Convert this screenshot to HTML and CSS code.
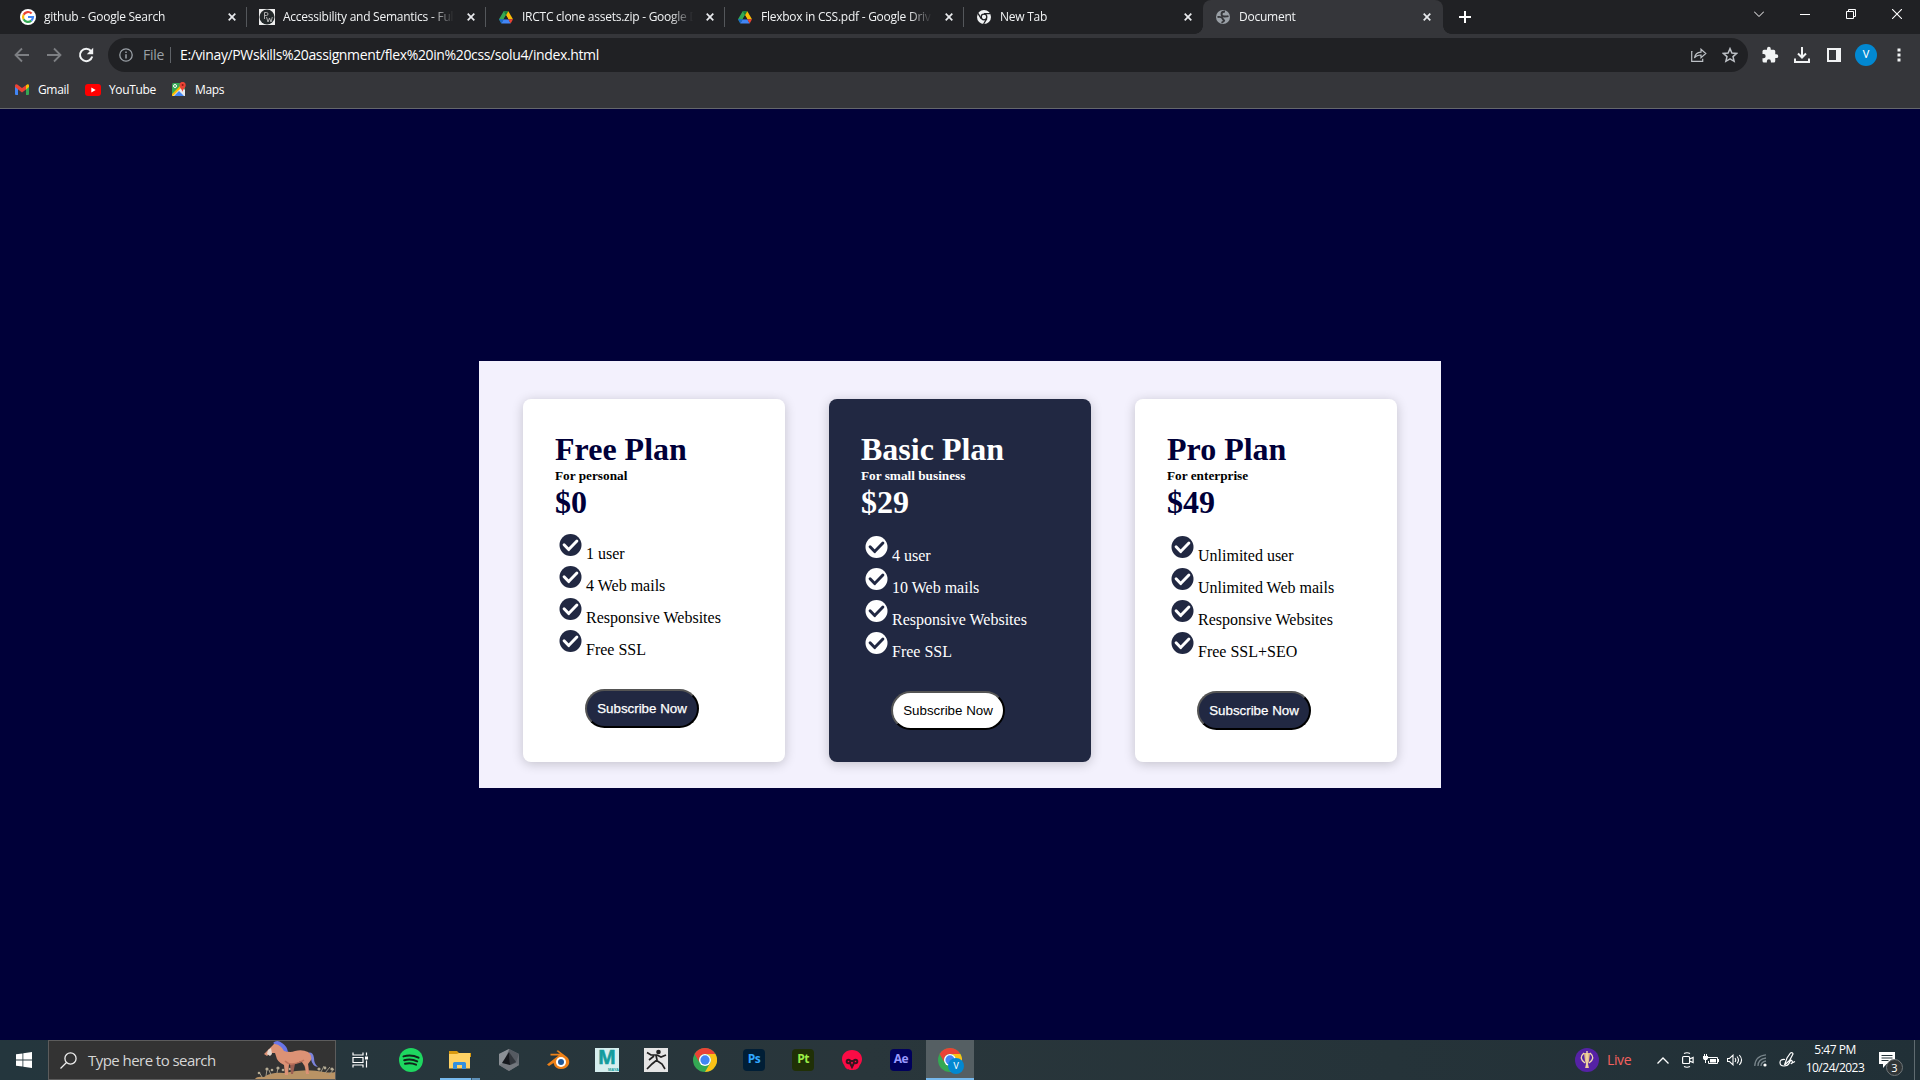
FILE: index.html
```html
<!DOCTYPE html>
<html lang="en">
<head>
<meta charset="utf-8">
<title>Document</title>
<link rel="stylesheet" href="styles.css">
</head>
<body>
<svg class="sprite" aria-hidden="true">
  <symbol id="x" viewBox="0 0 8 8"><path d="M.7.7l6.600 6.600M7.300.7L.7 7.300" stroke="#e8eaed" stroke-width="1.700"/></symbol>
  <symbol id="check" viewBox="0 0 24 24"><circle cx="12" cy="12" r="12" fill="currentColor"/><path class="tick" d="M5 11.800l5 5.200 9-9.400" fill="none" stroke-width="3.200" stroke-linecap="round" stroke-linejoin="round"/></symbol>
  <symbol id="drive" viewBox="0 0 24 22"><path d="M8 1h8L8.200 14.500 4 22 0 15z" fill="#34a853"/><path d="M8 1h8l-4 7z" fill="#188038"/><path d="M16 1l8 14h-8L12 8z" fill="#fbbc04"/><path d="M8 15h8l4 7H4z" fill="#4285f4"/><path d="M16 15h8l-4 7z" fill="#ea4335"/><path d="M0 15h8l-4 7z" fill="#1967d2"/><path d="M12 8l4 7H8z" fill="#202124"/></symbol>
  <symbol id="chrome" viewBox="0 0 48 48"><circle cx="24" cy="24" r="24" fill="#34a853"/><path d="M3.200 12A24 24 0 0 1 44.800 12H24a12 12 0 0 0-10.400 18z" fill="#ea4335"/><path d="M44.800 12A24 24 0 0 1 24 48L34.400 30A12 12 0 0 0 24 12z" fill="#fbc116"/><circle cx="24" cy="24" r="12" fill="#fff"/><circle cx="24" cy="24" r="9.300" fill="#4285f4"/></symbol>
</svg>

<header class="browser">
  <div class="tabstrip">
    <div class="tab"><svg class="fav" viewBox="0 0 16 16"><circle cx="8" cy="8" r="8" fill="#fff"/><g fill="none" stroke-width="2.200"><path d="M11.600 4.500A5 5 0 0 0 3.600 5.700" stroke="#ea4335"/><path d="M3.600 5.700a5 5 0 0 0 0 4.600" stroke="#fbbc05"/><path d="M3.600 10.300a5 5 0 0 0 7.700 1.400" stroke="#34a853"/><path d="M11.300 11.700A5 5 0 0 0 13 8H8" stroke="#4285f4"/></g></svg><span class="label">github - Google Search</span><svg class="close"><use href="#x"/></svg></div>
    <div class="tab"><svg class="fav" viewBox="0 0 16 16"><path d="M0 0h16v16H0z" fill="#eee"/><circle cx="8" cy="8" r="7.500" fill="#222829"/><path d="M5.500 10V3.500h2a1.500 1.500 0 0 1 0 3h-2M7.500 8l1.500 5 1.500-4 1.500 4 1.300-5" fill="none" stroke="#bbb" stroke-width=".9"/></svg><span class="label">Accessibility and Semantics - Full</span><svg class="close"><use href="#x"/></svg></div>
    <div class="tab"><svg class="fav drive"><use href="#drive"/></svg><span class="label">IRCTC clone assets.zip - Google D</span><svg class="close"><use href="#x"/></svg></div>
    <div class="tab"><svg class="fav drive"><use href="#drive"/></svg><span class="label">Flexbox in CSS.pdf - Google Driv</span><svg class="close"><use href="#x"/></svg></div>
    <div class="tab last"><svg class="fav" viewBox="0 0 16 16"><circle cx="8" cy="8" r="7" fill="#f1f3f4"/><circle cx="8" cy="8" r="2.800" fill="none" stroke="#202124" stroke-width="1.300"/><path d="M8 4.700h6.500M5.200 9.600L2 4.300M10.800 9.600L7.600 15" stroke="#202124" stroke-width="1.300"/></svg><span class="label">New Tab</span><svg class="close"><use href="#x"/></svg></div>
    <div class="tab active"><svg class="fav" viewBox="0 0 16 16"><circle cx="8" cy="8" r="7" fill="#9aa0a6"/><path d="M10 2.500Q6.500 2.500 6.500 5t3 2.500 4-.3M2.500 8q4-.5 4.800 1.200T9 11.300 6.500 13.800" fill="none" stroke="#35363a" stroke-width="1.900"/></svg><span class="label">Document</span><svg class="close"><use href="#x"/></svg></div>
    <svg class="plus" viewBox="0 0 12 12"><path d="M6 0v12M0 6h12" stroke="#fff" stroke-width="2"/></svg>
    <div class="winctl">
      <svg viewBox="0 0 10 10"><path d="M0 2.500l5 5 5-5" fill="none" stroke="#fff"/></svg>
      <svg viewBox="0 0 10 10"><path d="M0 5.500h10" stroke="#fff"/></svg>
      <svg viewBox="0 0 10 10"><path d="M.5 2.500h7v7h-7zM2.500 2.500v-2h7v7h-2" fill="none" stroke="#fff"/></svg>
      <svg viewBox="0 0 10 10"><path d="M0 0l10 10M10 0L0 10" stroke="#fff" stroke-width="1.100"/></svg>
    </div>
  </div>

  <div class="toolbar">
    <svg class="nav dim" viewBox="0 0 16 16"><path d="M15 8H2M8 1.500L1.500 8 8 14.500" fill="none" stroke="currentColor" stroke-width="1.800"/></svg>
    <svg class="nav dim" viewBox="0 0 16 16"><path d="M1 8h13M8 1.500L14.500 8 8 14.500" fill="none" stroke="currentColor" stroke-width="1.800"/></svg>
    <svg class="nav" viewBox="0 0 16 16"><path d="M13 4A6.200 6.200 0 1 0 14.200 9.500" fill="none" stroke="currentColor" stroke-width="2"/><path d="M15.200.8v6.400H8.800z" fill="currentColor"/></svg>
    <div class="omnibox">
      <svg class="info" viewBox="0 0 14 14"><circle cx="7" cy="7" r="6.200" fill="none" stroke="#9aa0a6" stroke-width="1.300"/><path d="M7 6.200v4.300M7 3.500V5" stroke="#9aa0a6" stroke-width="1.500"/></svg>
      <span class="scheme">File</span>
      <span class="url">E:/vinay/PWskills%20assignment/flex%20in%20css/solu4/index.html</span>
      <svg class="share" viewBox="0 0 16 14"><path d="M1.500 3.500H.7v9.800h11v-2.600M3.500 10c.5-3.800 3-5.700 6.500-5.900V1.200l4.800 4.300L10 9.600V7C7 7 5 7.900 3.500 10z" fill="none" stroke="#bdc1c6" stroke-width="1.200"/></svg>
      <svg class="star" viewBox="0 0 16 16"><path d="M8 1.600l1.900 4.400 4.800.4L11 9.600l1.100 4.700L8 11.800l-4.100 2.500L5 9.600 1.300 6.400l4.800-.4z" fill="none" stroke="#bdc1c6" stroke-width="1.500"/></svg>
    </div>
    <div class="actions">
      <svg viewBox="0 0 24 24" width="18" height="18"><path d="M20.500 11H19V7a2 2 0 0 0-2-2h-4V3.500a2.500 2.500 0 0 0-5 0V5H4a2 2 0 0 0-2 2v3.800h1.500a2.700 2.700 0 0 1 0 5.400H2V20a2 2 0 0 0 2 2h3.800v-1.500a2.700 2.700 0 0 1 5.400 0V22H17a2 2 0 0 0 2-2v-4h1.500a2.500 2.500 0 0 0 0-5z" fill="#f1f3f4"/></svg>
      <svg viewBox="0 0 16 16" width="16" height="16"><path d="M8 0v10M4 6.500l4 4 4-4M1 11.500V15h14v-3.500" fill="none" stroke="#f1f3f4" stroke-width="2"/></svg>
      <svg viewBox="0 0 14 14" width="14" height="14"><path d="M1 1h12v12H1z" fill="none" stroke="#f1f3f4" stroke-width="2"/><path d="M9 0h5v14H9z" fill="#f1f3f4"/></svg>
      <span class="avatar">V</span>
      <svg class="dots" viewBox="0 0 4 14" width="4" height="14"><path d="M.5.500h3v3h-3zM.5 5.500h3v3h-3zM.5 10.500h3v3h-3z" fill="#f1f3f4"/></svg>
    </div>
  </div>

  <nav class="bookmarks">
    <span class="bm gmail"><svg viewBox="0 0 14 11" width="14" height="11"><path d="M0 1.500L3 3.500V11H1a1 1 0 0 1-1-1z" fill="#4285f4"/><path d="M14 1.500l-3 2V11h2a1 1 0 0 0 1-1z" fill="#34a853"/><path d="M11 1.200L12.500.2Q14 0 14 1.500V3l-3 2.500z" fill="#fbbc04"/><path d="M0 1.500Q.5-.5 2.300.5L7 4.100l4-2.900v4.300L7 8.500 0 3z" fill="#ea4335"/></svg>Gmail</span>
    <span class="bm youtube"><svg viewBox="0 0 16 12" width="16" height="12"><rect width="16" height="12" rx="3" fill="#f00"/><path d="M6.300 3.500v5l4.400-2.500z" fill="#fff"/></svg>YouTube</span>
    <span class="bm maps"><svg viewBox="0 0 14 15" width="14" height="15"><rect y="1" width="13" height="13" rx="1.500" fill="#34a853"/><path d="M0 13L9 4l4 4v6H0z" fill="#e8eaed"/><path d="M0 12L9 3l1.500 1.500L1 14H0z" fill="#fbbc04"/><path d="M2 14l5-5 5 5z" fill="#4285f4"/><circle cx="3" cy="4" r="1.500" fill="none" stroke="#fff"/><path d="M10.500 10C10 7 7.500 6 7.500 3a3 3 0 0 1 6.200 0c0 3-2.700 4-3.200 7z" fill="#ea4335"/><circle cx="10.600" cy="3" r="1" fill="#8c1b13"/></svg>Maps</span>
  </nav>
</header>

<main class="page">
  <section class="plans">
    <article class="card free">
      <h1>Free Plan</h1><h5>For personal</h5><h1>$0</h1>
      <ul>
        <li><svg><use href="#check"/></svg><span>1 user</span></li>
        <li><svg><use href="#check"/></svg><span>4 Web mails</span></li>
        <li><svg><use href="#check"/></svg><span>Responsive Websites</span></li>
        <li><svg><use href="#check"/></svg><span>Free SSL</span></li>
      </ul>
      <button>Subscribe Now</button>
    </article>
    <article class="card dark">
      <h1>Basic Plan</h1><h5>For small business</h5><h1>$29</h1>
      <ul>
        <li><svg><use href="#check"/></svg><span>4 user</span></li>
        <li><svg><use href="#check"/></svg><span>10 Web mails</span></li>
        <li><svg><use href="#check"/></svg><span>Responsive Websites</span></li>
        <li><svg><use href="#check"/></svg><span>Free SSL</span></li>
      </ul>
      <button>Subscribe Now</button>
    </article>
    <article class="card">
      <h1>Pro Plan</h1><h5>For enterprise</h5><h1>$49</h1>
      <ul>
        <li><svg><use href="#check"/></svg><span>Unlimited user</span></li>
        <li><svg><use href="#check"/></svg><span>Unlimited Web mails</span></li>
        <li><svg><use href="#check"/></svg><span>Responsive Websites</span></li>
        <li><svg><use href="#check"/></svg><span>Free SSL+SEO</span></li>
      </ul>
      <button>Subscribe Now</button>
    </article>
  </section>
</main>

<footer class="taskbar">
  <div class="start"><svg viewBox="0 0 16 16" width="16" height="16"><path d="M0 2.300L6.500 1.400V7.600H0zM7.300 1.300L16 0v7.600H7.300zM0 8.400h6.500v6.200L0 13.700zM7.300 8.400H16V16l-8.700-1.300z" fill="#fff"/></svg></div>
  <div class="search">
    <svg class="lens" viewBox="0 0 17 17"><circle cx="10.500" cy="6.500" r="5.600" fill="none" stroke="#eee" stroke-width="1.300"/><path d="M6.500 10.500L.5 16.500" stroke="#eee" stroke-width="1.300"/></svg>
    <span class="hint">Type here to search</span>
    <svg class="horse" viewBox="0 0 80 38">
      <path d="M0 38q2-3 9-2 7-5 20-4 22-5 40-1 8 1 11 0v7z" fill="#b99365"/>
      <path d="M7 36l-3-5m7 4l1-7m4 6l-2-5m8 3l1-5m43 4l3-6m1 7l5-6m-1 8l5-6" stroke="#a29a88" fill="none"/>
      <g fill="#b5ab94"><circle cx="4" cy="32" r="1.300"/><circle cx="12" cy="28" r="1.600"/><circle cx="17" cy="29" r="1.300"/><circle cx="23" cy="27" r="1.600"/><circle cx="28" cy="29" r="1.300"/><circle cx="35" cy="28" r="1.300"/><circle cx="64" cy="28" r="1.600"/><circle cx="70" cy="27" r="1.400"/><circle cx="77" cy="28" r="1.600"/></g>
      <path d="M52 12q6-2 7 5 0 6 4 9-6-1-7-8-1-4-4-4z" fill="#7b83dc"/>
      <path d="M40 23l-2 10h-2l-1-10zM48 22l4 10h2l-1-10z" fill="#9c5f52"/>
      <path d="M14 8L19 3l1-2 3 2q5 3 8 7 4 2 9 0 7-2 13 1 4 3 3 8l-3 4 1 10h-3l-1-8-4-5q-6 4-12 3l-1 11h-3l-1-10q-7-3-8-9l-1-3-5 0-3 3-3-2z" fill="#dc9275"/>
      <path d="M13 9l3-2 1 6-2 2-3-2z" fill="#e8d9d0"/>
      <path d="M18 2q4-4 9 0 5 3 6 9l-4-1q-3-6-9-7z" fill="#6875e8"/>
      <path d="M30 20q3 3 7 3 8-1 12-4" fill="none" stroke="#bd735d" stroke-width="1.500"/>
    </svg>
  </div>
  <div class="apps">
    <div class="app view"><svg viewBox="0 0 17 16" width="17" height="16"><path d="M1 .5v2.500h10V.5M1 15.500V13h10v2.500M1 5.500h10v5H1zM14.500.5v3M14.500 8.500v7" fill="none" stroke="#fff" stroke-width="1.200"/><path d="M13 4.500h3v3h-3z" fill="#fff"/></svg></div>
    <div class="app"><svg viewBox="0 0 24 24" width="24" height="24"><circle cx="12" cy="12" r="12" fill="#1ed760"/><path d="M4.500 8.400q8-2.200 15 1.300M5.200 12.200q7-1.900 13 1.200M6 15.700q6-1.500 11 1" fill="none" stroke="#10241a" stroke-width="2" stroke-linecap="round"/></svg></div>
    <div class="app open"><svg viewBox="0 0 22 18" width="22" height="18"><path d="M0 0h8l2 2h12v4H0z" fill="#d99a10"/><path d="M0 3h8l2-1h11v15.500H0z" fill="#ffd264"/><path d="M4 18v-5.500q0-1.500 1.500-1.500h10q1.500 0 1.500 1.500V18h-4v-4H8v4z" fill="#3390df"/></svg></div>
    <div class="app"><svg viewBox="0 0 22 24" width="22" height="24"><path d="M11 1l10 5v11l-10 6L1 17V6z" fill="#676c73"/><path d="M11 1l10 5-4 11-6 6V1z" fill="#555a61"/><path d="M1 6l10-5-6 16-4 0z" fill="#8b9096"/><path d="M1 17l4-2 7 2 6-2 3 2-10 6z" fill="#74787e"/><path d="M11 4l7 10-6 3z" fill="#32363c"/><path d="M11 4l1 13-8-2z" fill="#15181d"/></svg></div>
    <div class="app"><svg viewBox="0 0 24 20" width="24" height="20"><path d="M1 14.500L12.500 5.500H4.500V3.700H14L10.500 1 12 .2 21 7q3 3 2 7-2 5-8 5-6 0-7.500-6L3 16z" fill="#ee8118"/><circle cx="15" cy="12" r="5" fill="#fff"/><circle cx="15" cy="12" r="3" fill="#20599a"/></svg></div>
    <div class="app"><span class="maya"><b>M</b><i>MAYA</i></span></div>
    <div class="app"><svg viewBox="0 0 24 24" width="24" height="24"><rect width="24" height="24" fill="#e5e5e5"/><circle cx="14.500" cy="4" r="2.300" fill="#222"/><path d="M3 4.500l4 2.500 6 0 4 2 5-2M12 7l1 5-5 4-5 5M12 12l6 4 3 5M5 12l5-4" fill="none" stroke="#222" stroke-width="1.700"/></svg></div>
    <div class="app"><svg width="24" height="24"><use href="#chrome"/></svg></div>
    <div class="app"><span class="adobe ps">Ps</span></div>
    <div class="app"><span class="adobe pt">Pt</span></div>
    <div class="app"><svg viewBox="0 0 20 20" width="20" height="20"><path d="M10 0C4 0 0 4 0 9c0 4 2 5 3 8 2 3 5 3 7 3s5 0 7-3c1-3 3-4 3-8 0-5-4-9-10-9z" fill="#fb0b45"/><g fill="none" stroke="#35151f" stroke-width="2"><circle cx="6.500" cy="11.500" r="1.800"/><circle cx="13.500" cy="11.500" r="1.800"/><path d="M8 13l2 4 2-4M8 11h4"/></g></svg></div>
    <div class="app"><span class="adobe ae">Ae</span></div>
    <div class="app current"><svg width="24" height="24"><use href="#chrome"/></svg><span class="profile">V</span></div>
  </div>
  <div class="tray">
    <svg class="cup" viewBox="0 0 24 24" width="24" height="24"><circle cx="12" cy="12" r="12" fill="#5522a5"/><path d="M9 5h6l-1 8-1 3 1 4h-4l1-4-1-3z" fill="#e5bd84"/><path d="M9 5q-6 5 1 10M15 5q6 5-1 10M12 3v17" fill="none" stroke="#f1d9b0" stroke-width="1.400"/></svg>
    <span class="live">Live</span>
    <svg class="i-up" viewBox="0 0 12 7" width="12" height="7"><path d="M.5 6.500L6 1l5.500 5.500" fill="none" stroke="#fff" stroke-width="1.300"/></svg>
    <svg class="i-cam" viewBox="0 0 12 16" width="12" height="16"><path d="M.6 5.500Q.6 4.500 1.600 4.500h5q1 0 1 1v5q0 1-1 1h-5q-1 0-1-1zM7.600 7l3.500-1.500v5L7.600 9M2 1.500Q5 0 8 1.500M2 14.500q3 1.500 6 0" fill="none" stroke="#fff" stroke-width="1.200"/></svg>
    <svg class="i-bat" viewBox="0 0 16 12" width="16" height="12"><path d="M4.500 3.500h10v6h-9V7" fill="none" stroke="#fff"/><path d="M7 5h6v3.500H7zM15 5h1v3h-1zM0 2h5v2.500l-1 1.500H1L0 4.500zM1 0h1v2H1zM3 0h1v2H3zM2 5h1v4H2z" fill="#fff"/></svg>
    <svg class="i-vol" viewBox="0 0 16 12" width="16" height="12"><path d="M.5 4.500h2L6 1.200v9.600L2.500 7.500h-2zM8 4q1.500 2 0 4M10 2.500q3 3.500 0 7M12.300 1q4.500 5 0 10" fill="none" stroke="#fff" stroke-width="1.100"/></svg>
    <svg class="i-net" viewBox="0 0 13 13" width="13" height="13"><path d="M.8 12Q1 2 12 .8M4 12q0-7 8-8M7 12q0-4 5-5" fill="none" stroke="#78858b" stroke-width="1.300"/><circle cx="11" cy="11" r="1.600" fill="#fff"/></svg>
    <svg class="i-pen" viewBox="0 0 17 16" width="17" height="16"><path d="M5.500 13L8 6l3.500-5q2-1 2.500 1L10.500 8.500l-5 4.500M6 7.500Q1 7 1 10.500T5 14q4 0 5.500-3.500T13 9t-.5 2.500T16 9.500" fill="none" stroke="#fff" stroke-width="1.200"/></svg>
    <div class="clock"><span>5:47 PM</span><span>10/24/2023</span></div>
    <div class="notif"><svg viewBox="0 0 16 16" width="16" height="16"><path d="M0 0h16v12H7.500L4 16v-4H0z" fill="#fff"/><path d="M2.500 3.500h11M2.500 6h11M2.500 8.500h7" stroke="#25343a"/></svg><span class="count">3</span></div>
  </div>
</footer>
</body>
</html>
```
FILE: styles.css
```css
* { box-sizing: border-box; }
body {
  margin: 0;
  height: 1080px;
  display: flex;
  flex-direction: column;
  overflow: hidden;
  background: #000039;
  font-family: "Open Sans", "Noto Sans", sans-serif;
}
svg { display: block; flex: none; }
.sprite { position: absolute; width: 0; height: 0; }

/* browser chrome */
.browser { height: 109px; background: #35363a; border-bottom: 1px solid #65676b; color: #fff; }
.tabstrip { height: 34px; background: #202124; display: flex; align-items: center; padding-left: 8px; }
.tab { width: 239px; height: 34px; display: flex; align-items: center; padding-left: 12px; position: relative; }
.tab:not(.last):not(.active)::after { content: ""; position: absolute; right: 0; top: 7px; width: 1px; height: 20px; background: #54575b; }
.tab.active { width: 240px; background: #35363a; border-radius: 8px 8px 0 0; }
.tab.active::before, .tab.active::after { content: ""; position: absolute; bottom: 0; width: 8px; height: 8px; }
.tab.active::before { left: -8px; background: radial-gradient(circle at 0 0, #202124 7.5px, #35363a 8px); }
.tab.active::after { right: -8px; background: radial-gradient(circle at 100% 0, #202124 7.5px, #35363a 8px); }
.fav { width: 16px; height: 16px; margin-right: 8px; }
.fav.drive { height: 14px; padding: 0 1px; }
.label {
  width: 171px; height: 18px; line-height: 17px; font-size: 12px; letter-spacing: -.25px;
  white-space: nowrap; color: #f1f3f4;
  -webkit-mask-image: linear-gradient(90deg, #000 148px, transparent 171px);
  mask-image: linear-gradient(90deg, #000 148px, transparent 171px);
}
.close { width: 8px; height: 8px; margin-left: 13px; }
.plus { width: 12px; height: 12px; margin-left: 16px; }
.winctl { display: flex; gap: 36px; margin-left: auto; padding: 0 18px 6px 0; }
.winctl svg { width: 10px; height: 10px; }

.toolbar { display: flex; align-items: center; padding: 4px 0 4px 14px; height: 42px; }
.nav { width: 16px; height: 16px; margin-right: 16px; color: #f1f3f4; }
.nav.dim { color: #7d7f83; }
.nav:nth-child(3) { margin-right: 14px; }
.omnibox { width: 1640px; height: 34px; border-radius: 17px; background: #202124; display: flex; align-items: center; padding: 0 10px 0 11px; }
.info { width: 14px; height: 14px; margin-right: 10px; }
.scheme { width: 28px; height: 16px; line-height: 15px; border-right: 1px solid #5f6368; font-size: 14px; letter-spacing: -.3px; color: #9aa0a6; }
.url { margin-left: 9px; font-size: 14px; letter-spacing: -.37px; line-height: 18px; }
.share { width: 16px; height: 14px; margin-left: auto; position: relative; left: 1px; }
.star { width: 16px; height: 16px; margin-left: 16px; }
.actions { display: grid; grid-template-columns: repeat(5, 32px); justify-items: center; align-items: center; margin-left: 6px; }
.avatar { width: 22px; height: 22px; border-radius: 50%; background: #0288d1; font: 11px/22px Roboto, sans-serif; text-align: center; }
.dots { margin-left: 1px; }
.bookmarks { display: flex; height: 28px; align-items: center; padding-left: 15px; font-size: 12px; letter-spacing: -.35px; }
.bm { display: flex; align-items: center; height: 28px; padding-bottom: 1px; }
.gmail { width: 70px; gap: 9px; }
.youtube { width: 87px; gap: 8px; }
.maps { gap: 9px; }

/* pricing */
.page { flex: 1; display: flex; flex-direction: column; align-items: center; padding-top: 252px; font-family: "Liberation Serif", serif; }
.plans { width: 962px; height: 427px; padding: 38px 0 26px; background: #f3f1fd; display: flex; justify-content: space-evenly; }
.card { --disc: #212842; --tick: #fff; width: 262px; padding: 32px; border-radius: 8px; background: #fff; box-shadow: 0 2px 12px rgba(0, 0, 0, .2); color: #000; }
.card h1, .card h5, .card ul { margin: 0; }
.card h1 { height: 37px; line-height: 37px; font-size: 32px; color: #000039; }
.card h5 { height: 15px; line-height: 15px; font-size: 13.28px; }
.card h5 + h1 { line-height: 39px; }
.card ul { list-style: none; padding: 16px 0 0 4px; }
.card.free ul { padding-top: 14px; }
.card li { height: 32px; display: flex; gap: 4px; line-height: 18px; font-size: 16px; white-space: nowrap; }
.card li svg { width: 23px; height: 22px; color: var(--disc); }
.card li span { padding-top: 11px; }
.tick { stroke: var(--tick); }
.card button {
  width: 114px; height: 39px; margin: 27px 0 0 30px; padding: 0;
  border: 2px outset #000; border-radius: 20px;
  background: #212842; color: #fff; font: 13.333px "Liberation Sans", sans-serif;
  -webkit-text-stroke: .25px #fff;
}
.card.dark { --disc: #fff; --tick: #212842; background: #212842; color: #fff; }
.card.dark h1 { color: #fff; }
.card.dark button { background: #fff; color: #000; -webkit-text-stroke: 0; }

/* taskbar */
.taskbar { height: 40px; display: flex; background: linear-gradient(90deg, #24363d, #29363b 45%, #213037); color: #fff; }
.start { width: 48px; display: grid; place-items: center; }
.search { width: 288px; display: flex; align-items: center; background: #333; border: 1px solid #5c5c5c; padding-left: 11px; }
.lens { width: 17px; height: 17px; margin-right: 11px; }
.hint { width: 168px; font-size: 15px; letter-spacing: -.55px; line-height: 20px; color: #d6d6d6; white-space: nowrap; }
.horse { width: 80px; height: 38px; }
.apps { display: flex; gap: 1px; }
.app { width: 48px; display: grid; place-items: center; position: relative; }
.app.view { width: 50px; padding-right: 2px; }
.app.open::after { content: ""; position: absolute; left: 4px; bottom: 0; width: 40px; height: 2px; background: linear-gradient(90deg, #76b9ed 31px, #39566b 31px, #39566b 32px, #5d8fb6 32px); }
.app.current { background: #555f63; border-bottom: 2px solid #76b9ed; padding-top: 2px; }
.profile { position: absolute; left: 22px; top: 18px; width: 16px; height: 16px; border-radius: 50%; background: #0288d1; font: 9px/16px Roboto, sans-serif; text-align: center; }
.adobe { width: 22px; height: 22px; border-radius: 4px; font-size: 12px; line-height: 20px; font-weight: 700; letter-spacing: -.5px; text-align: center; }
.ps { background: #001e36; color: #31a8ff; }
.pt { background: #203006; color: #9bee47; }
.ae { background: #00005b; color: #9999ff; }
.maya { width: 24px; height: 24px; background: #d5eeee; color: #139c9d; display: flex; flex-direction: column; align-items: center; }
.maya b { font-size: 19px; line-height: 19px; height: 19px; -webkit-text-stroke: .6px #139c9d; }
.maya i { font: bold 4px/5px "Liberation Sans", sans-serif; align-self: flex-end; }
.tray { margin-left: auto; width: 345px; display: flex; align-items: center; }
.live { width: 25px; margin-left: 8px; font-size: 14px; letter-spacing: -.4px; line-height: 20px; color: #f5615f; }
.i-up { margin-left: 25px; }
.i-cam { margin-left: 13px; }
.i-bat { margin-left: 9px; }
.i-vol { margin-left: 8px; }
.i-net { margin-left: 11px; }
.i-pen { margin-left: 12px; }
.clock { width: 62px; margin-left: 8px; display: flex; flex-direction: column; align-items: center; font-size: 12px; line-height: 18px; letter-spacing: -.5px; padding-bottom: 2px; white-space: nowrap; }
.notif { width: 36px; height: 40px; margin-left: 13px; padding: 12px 0 0 0; border-right: 1px solid #5f6b70; position: relative; }
.count { position: absolute; left: 7px; top: 19px; width: 17px; height: 17px; border-radius: 50%; border: 1px solid #70777a; background: #303537; font-size: 11px; line-height: 15px; text-align: center; }
```
